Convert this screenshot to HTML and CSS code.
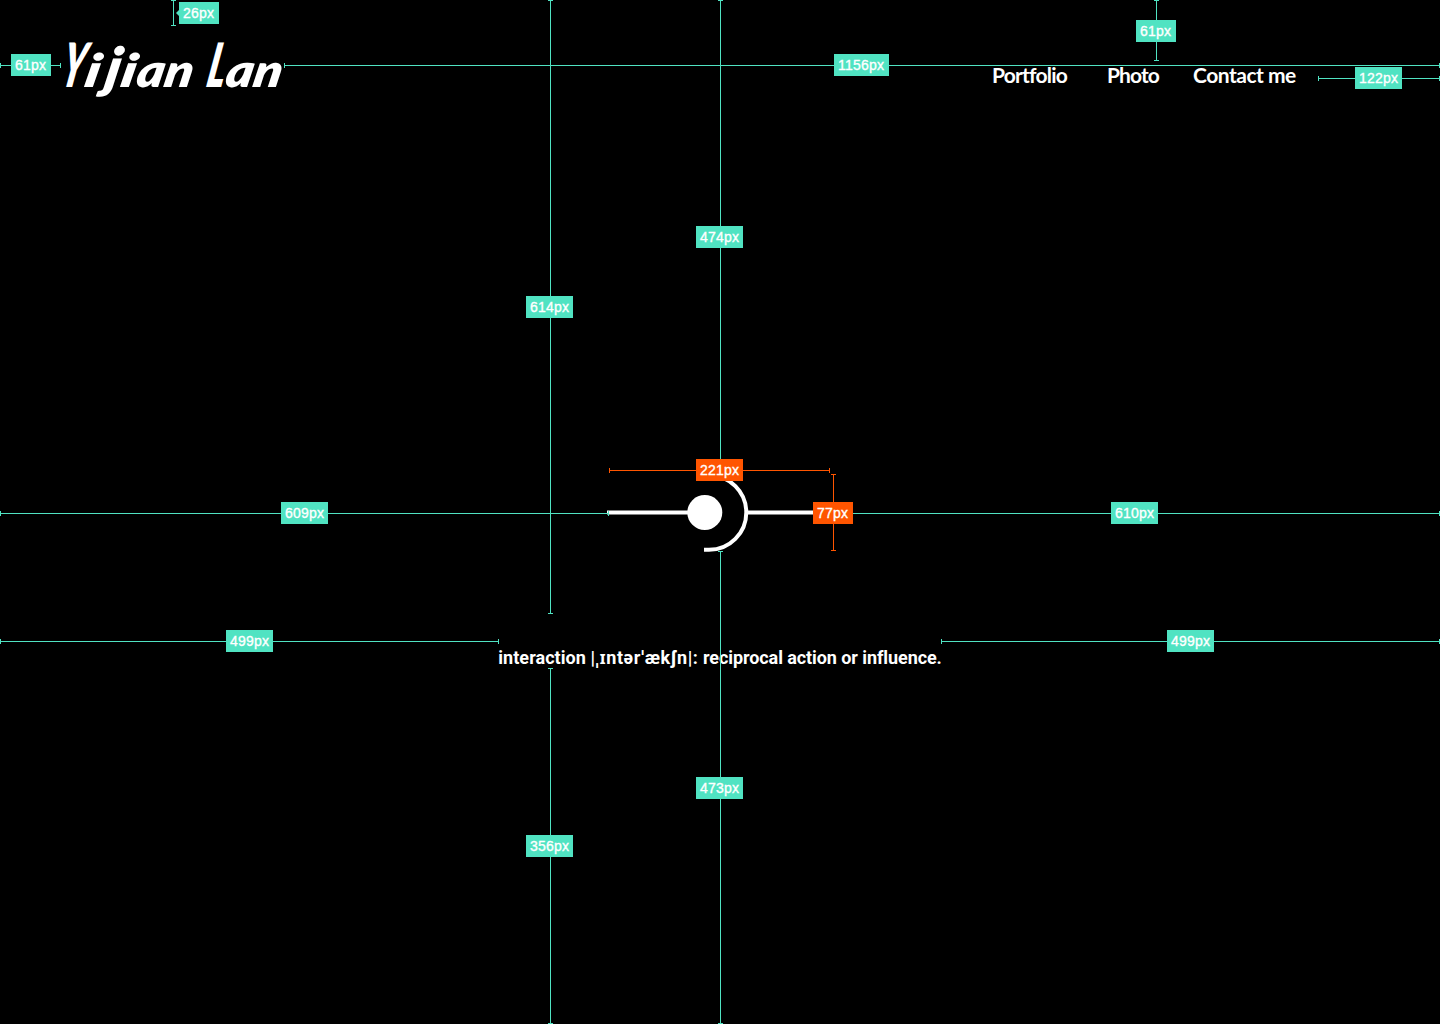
FILE: index.html
```html
<!DOCTYPE html>
<html lang="en">
<head>
<meta charset="utf-8">
<title>Yijian Lan</title>
<link rel="stylesheet" href="styles.css">
</head>
<body>
<div class="page">
  <header class="header">
    <svg class="logo" width="230" height="76" viewBox="0 0 230 76">
      <text transform="translate(0 53) skewX(-11)"><tspan class="cap" x="0" textLength="23" lengthAdjust="spacingAndGlyphs">Y</tspan><tspan class="low" x="24" textLength="15" lengthAdjust="spacingAndGlyphs">i</tspan><tspan class="tail" x="44" textLength="15" lengthAdjust="spacingAndGlyphs">j</tspan><tspan class="low" x="60" textLength="15" lengthAdjust="spacingAndGlyphs">i</tspan><tspan class="low" x="76" textLength="56" lengthAdjust="spacingAndGlyphs">an</tspan> <tspan class="cap" x="146" textLength="18" lengthAdjust="spacingAndGlyphs">L</tspan><tspan class="low" x="165" textLength="56" lengthAdjust="spacingAndGlyphs">an</tspan></text>
    </svg>
    <nav class="nav">
      <a class="portfolio">Portfolio</a>
      <a class="photo">Photo</a>
      <a class="contact">Contact me</a>
    </nav>
  </header>
  <main class="hero">
    <svg class="mark" width="226" height="82" viewBox="606 472 226 82">
      <g fill="none" stroke="#fff" stroke-width="4">
        <path d="M607 512.5H690M748 512.5H830"/>
        <path d="M704 475.2H709A37.3 37.3 0 0 1 709 549.8H704"/>
      </g>
      <circle cx="704.8" cy="512.5" r="17.5" fill="#fff"/>
    </svg>
    <p class="tagline">interaction <span class="ipa">|ˌɪntərˈækʃn|:</span> <span class="meaning">reciprocal action or influence.</span></p>
  </main>
  <div class="overlay">
    <i class="line h logo-left"></i><i class="line h logo-right"></i>
    <i class="line v logo-top"></i><i class="line v nav-top"></i>
    <i class="line h nav-right"></i>
    <i class="line v mark-top"></i><i class="line v mark-bottom"></i>
    <i class="line v text-top"></i><i class="line v text-bottom"></i>
    <i class="line h mark-left"></i><i class="line h mark-right"></i>
    <i class="line h text-left"></i><i class="line h text-right"></i>
    <i class="line h size mark-width"></i><i class="line v size mark-height"></i>
    <span class="tag short t-logo-left">61px</span>
    <span class="tag long t-logo-right">1156px</span>
    <span class="tag short pointer t-logo-top">26px</span>
    <span class="tag short t-nav-top">61px</span>
    <span class="tag t-nav-right">122px</span>
    <span class="tag t-mark-top">474px</span>
    <span class="tag t-mark-bottom">473px</span>
    <span class="tag t-text-top">614px</span>
    <span class="tag t-text-bottom">356px</span>
    <span class="tag t-mark-left">609px</span>
    <span class="tag t-mark-right">610px</span>
    <span class="tag t-text-left">499px</span>
    <span class="tag t-text-right">499px</span>
    <span class="tag size t-mark-width">221px</span>
    <span class="tag short size t-mark-height">77px</span>
  </div>
</div>
</body>
</html>
```
FILE: styles.css
```css
* { box-sizing: border-box; }
body { margin: 0; background: #000; color: #fff; }
.page { position: relative; width: 1440px; height: 1024px; overflow: hidden; background: #000; }

.header { display: flex; justify-content: space-between; height: 120px; padding: 34px 122px 0 59px; }
.logo { overflow: visible; fill: #fff; font-family: Mistral, Lato, sans-serif; font-style: italic; font-weight: 800; }
.cap { font-size: 61px; }
.low { font-size: 46px; }
.tail { font-size: 55px; }
.nav { display: flex; padding-top: 26px; font: 700 21px/30px Futura, Lato, sans-serif; white-space: nowrap; }
.nav a { display: block; }
.portfolio { width: 115px; letter-spacing: -0.8px; }
.photo { width: 86px; letter-spacing: -0.9px; }
.contact { width: 125px; letter-spacing: -0.5px; }

.hero { display: flex; flex-direction: column; align-items: center; padding-top: 352px; }
.mark { display: block; margin-right: 2px; }
.tagline { margin: 91px 0 0; font: 700 18px/26px Roboto, "Noto Sans", sans-serif; letter-spacing: 0.05px; white-space: nowrap; }
.ipa { letter-spacing: 0.6px; }
.meaning { letter-spacing: -0.08px; }

.overlay { position: absolute; inset: 0; --guide: #50e3c2; }
.size { --guide: #ff5500; }
.line { position: absolute; background: var(--guide); }
.line::before, .line::after { content: ""; position: absolute; background: var(--guide); }
.h { height: 1px; }
.v { width: 1px; }
.h::before, .h::after { top: -2px; width: 1px; height: 5px; }
.h::before { left: 0; }
.h::after { right: 0; }
.v::before, .v::after { left: -2px; width: 5px; height: 1px; }
.v::before { top: 0; }
.v::after { bottom: 0; }

.logo-left { left: 0; top: 65px; width: 61px; }
.logo-right { left: 284px; top: 65px; width: 1156px; }
.logo-top { left: 173px; top: 0; height: 26px; }
.nav-top { left: 1156px; top: 0; height: 61px; }
.nav-right { left: 1318px; top: 78px; width: 122px; }
.mark-top { left: 720px; top: 0; height: 474px; }
.mark-bottom { left: 720px; top: 551px; height: 473px; }
.text-top { left: 550px; top: 0; height: 614px; }
.text-bottom { left: 550px; top: 668px; height: 356px; }
.mark-left { left: 0; top: 513px; width: 609px; }
.mark-right { left: 830px; top: 513px; width: 610px; }
.text-left { left: 0; top: 641px; width: 499px; }
.text-right { left: 941px; top: 641px; width: 499px; }
.mark-width { left: 609px; top: 470px; width: 221px; }
.mark-height { left: 833px; top: 474px; height: 77px; }

.tag {
  position: absolute; width: 47px; height: 22px; padding-left: 4px; background: var(--guide); color: #fff;
  font: 14px/22px "Liberation Sans", Arial, sans-serif; letter-spacing: 0.2px; white-space: nowrap;
  -webkit-text-stroke: 0.35px #fff;
}
.short { width: 40px; }
.long { width: 55px; }
.pointer::before { content: ""; position: absolute; left: -3px; top: 8px; border: solid transparent; border-width: 3px 3px 3px 0; border-right-color: var(--guide); }
.t-logo-left { left: 11px; top: 54px; }
.t-logo-right { left: 834px; top: 54px; }
.t-logo-top { left: 179px; top: 2px; }
.t-nav-top { left: 1136px; top: 20px; }
.t-nav-right { left: 1355px; top: 67px; }
.t-mark-top { left: 696px; top: 226px; }
.t-mark-bottom { left: 696px; top: 777px; }
.t-text-top { left: 526px; top: 296px; }
.t-text-bottom { left: 526px; top: 835px; }
.t-mark-left { left: 281px; top: 502px; }
.t-mark-right { left: 1111px; top: 502px; }
.t-text-left { left: 226px; top: 630px; }
.t-text-right { left: 1167px; top: 630px; }
.t-mark-width { left: 696px; top: 459px; }
.t-mark-height { left: 813px; top: 502px; }
```
